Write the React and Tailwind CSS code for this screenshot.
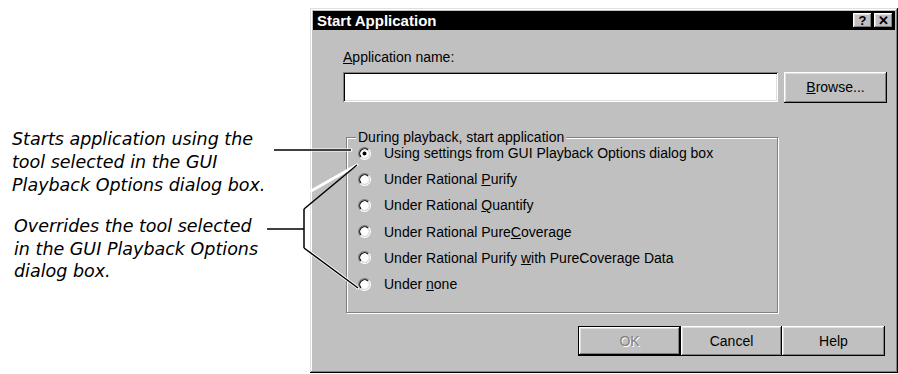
import React from "react";

const raised =
  "shadow-[inset_-1px_-1px_#000,inset_1px_1px_#fff,inset_-2px_-2px_#808080,inset_2px_2px_#dfdfdf]";
const sunken =
  "shadow-[inset_1px_1px_#808080,inset_-1px_-1px_#fff,inset_2px_2px_#000,inset_-2px_-2px_#dfdfdf]";

function Radio({ checked }) {
  return (
    <svg width="13" height="13" viewBox="0 0 12 12" className="shrink-0">
      <circle cx="6" cy="6" r="4.2" fill="#fff" />
      <path d="M2.11 9.89 A5.5 5.5 0 0 1 9.89 2.11" fill="none" stroke="#808080" strokeWidth="1" />
      <path d="M9.89 2.11 A5.5 5.5 0 0 1 2.11 9.89" fill="none" stroke="#fff" strokeWidth="1" />
      <path d="M2.82 9.18 A4.5 4.5 0 0 1 9.18 2.82" fill="none" stroke="#000" strokeWidth="1" />
      <path d="M9.18 2.82 A4.5 4.5 0 0 1 2.82 9.18" fill="none" stroke="#dfdfdf" strokeWidth="1" />
      {checked && <circle cx="6" cy="6" r="1.8" fill="#000" />}
    </svg>
  );
}

const options = [
  { label: "Using settings from GUI Playback Options dialog box", checked: true },
  { label: <>Under Rational <u>P</u>urify</> },
  { label: <>Under Rational <u>Q</u>uantify</> },
  { label: <>Under Rational Pure<u>C</u>overage</> },
  { label: <>Under Rational Purify <u>w</u>ith PureCoverage Data</> },
  { label: <>Under <u>n</u>one</> },
];

export default function App() {
  return (
    <div className="relative flex w-[898px] h-[374px] bg-white overflow-hidden">
      {/* Annotations */}
      <div className="w-[310px] shrink-0 flex flex-col pt-[128px] font-['DejaVu_Sans',sans-serif] italic text-[17.5px] leading-[23px] text-black">
        <p className="pl-[12px]">
          Starts application using the
          <br />
          tool selected in the GUI
          <br />
          Playback Options dialog box.
        </p>
        <p className="pl-[14px] mt-[18px] leading-[22.5px]">
          Overrides the tool selected
          <br />
          in the GUI Playback Options
          <br />
          dialog box.
        </p>
      </div>

      {/* Dialog */}
      <div className="mt-[8px] w-[588px] h-[365px] bg-[#c0c0c0] p-[3px] flex flex-col font-['Liberation_Sans',Arial,sans-serif] text-[14px] text-black shadow-[inset_-1px_-1px_#000,inset_1px_1px_#dfdfdf,inset_-2px_-2px_#808080,inset_2px_2px_#fff]">
        <div className="h-[19px] bg-black flex items-center justify-between pl-[4px] pr-[2px]">
          <span className="text-white font-bold text-[15px] leading-none">Start Application</span>
          <div className="flex gap-[2px]">
            <div className={`w-[19px] h-[15px] bg-[#c0c0c0] ${raised} flex items-center justify-center font-bold text-[13px] leading-none`}>
              ?
            </div>
            <div className={`w-[19px] h-[15px] bg-[#c0c0c0] ${raised} flex items-center justify-center font-bold text-[13px] leading-none`}>
              ✕
            </div>
          </div>
        </div>

        <div className="flex-1 flex flex-col pl-[30px] pr-[8px]">
          <div className="mt-[19px] leading-[16px]">
            <u>A</u>pplication name:
          </div>
          <div className="mt-[7px] flex gap-[6px]">
            <div className={`flex-1 h-[30px] bg-white ${sunken}`} />
            <div className={`w-[103px] h-[31px] bg-[#c0c0c0] ${raised} flex items-center justify-center`}>
              <span>
                <u>B</u>rowse...
              </span>
            </div>
          </div>

          <fieldset className="mt-[29px] ml-[3px] w-[432px] h-[181px] border border-[#808080] shadow-[1px_1px_0_#fff,inset_1px_1px_0_#fff] px-0 pb-0 pt-0">
            <legend className="ml-[9px] px-[2px] leading-[10px] bg-[#c0c0c0]">
              During playback, start application
            </legend>
            <div className="-mt-[2px] pl-[11px] flex flex-col">
              {options.map((o, i) => (
                <div key={i} className="h-[26.2px] flex items-center gap-[13px]">
                  <Radio checked={o.checked} />
                  <span className="leading-[14px]">{o.label}</span>
                </div>
              ))}
            </div>
          </fieldset>

          <div className="mt-[13px] flex justify-end pr-[2px]">
            <div className="w-[103px] h-[30px] border border-black bg-[#c0c0c0] shadow-[inset_-1px_-1px_#000,inset_1px_1px_#fff,inset_-2px_-2px_#808080,inset_2px_2px_#dfdfdf] flex items-center justify-center text-[#808080] [text-shadow:1px_1px_0_#fff]">
              OK
            </div>
            <div className={`w-[101px] h-[30px] bg-[#c0c0c0] ${raised} flex items-center justify-center`}>
              Cancel
            </div>
            <div className={`w-[103px] h-[30px] bg-[#c0c0c0] ${raised} flex items-center justify-center`}>
              Help
            </div>
          </div>
        </div>
      </div>

      {/* Leader lines */}
      <svg className="absolute inset-0 pointer-events-none" width="898" height="374">
        <g fill="none" stroke="#fff" strokeWidth="3" strokeLinecap="round">
          <path d="M311 150 H351" />
          <path d="M311 191 L357 165" />
          <path d="M311 253 L358 288" />
        </g>
        <g fill="none" stroke="#000" strokeWidth="1.5">
          <path d="M274 150 H351" />
          <path d="M267 229 H304" />
          <path d="M304 209 V248" />
          <path d="M304 209 L357 165" />
          <path d="M304 248 L358 288" />
        </g>
      </svg>
    </div>
  );
}
